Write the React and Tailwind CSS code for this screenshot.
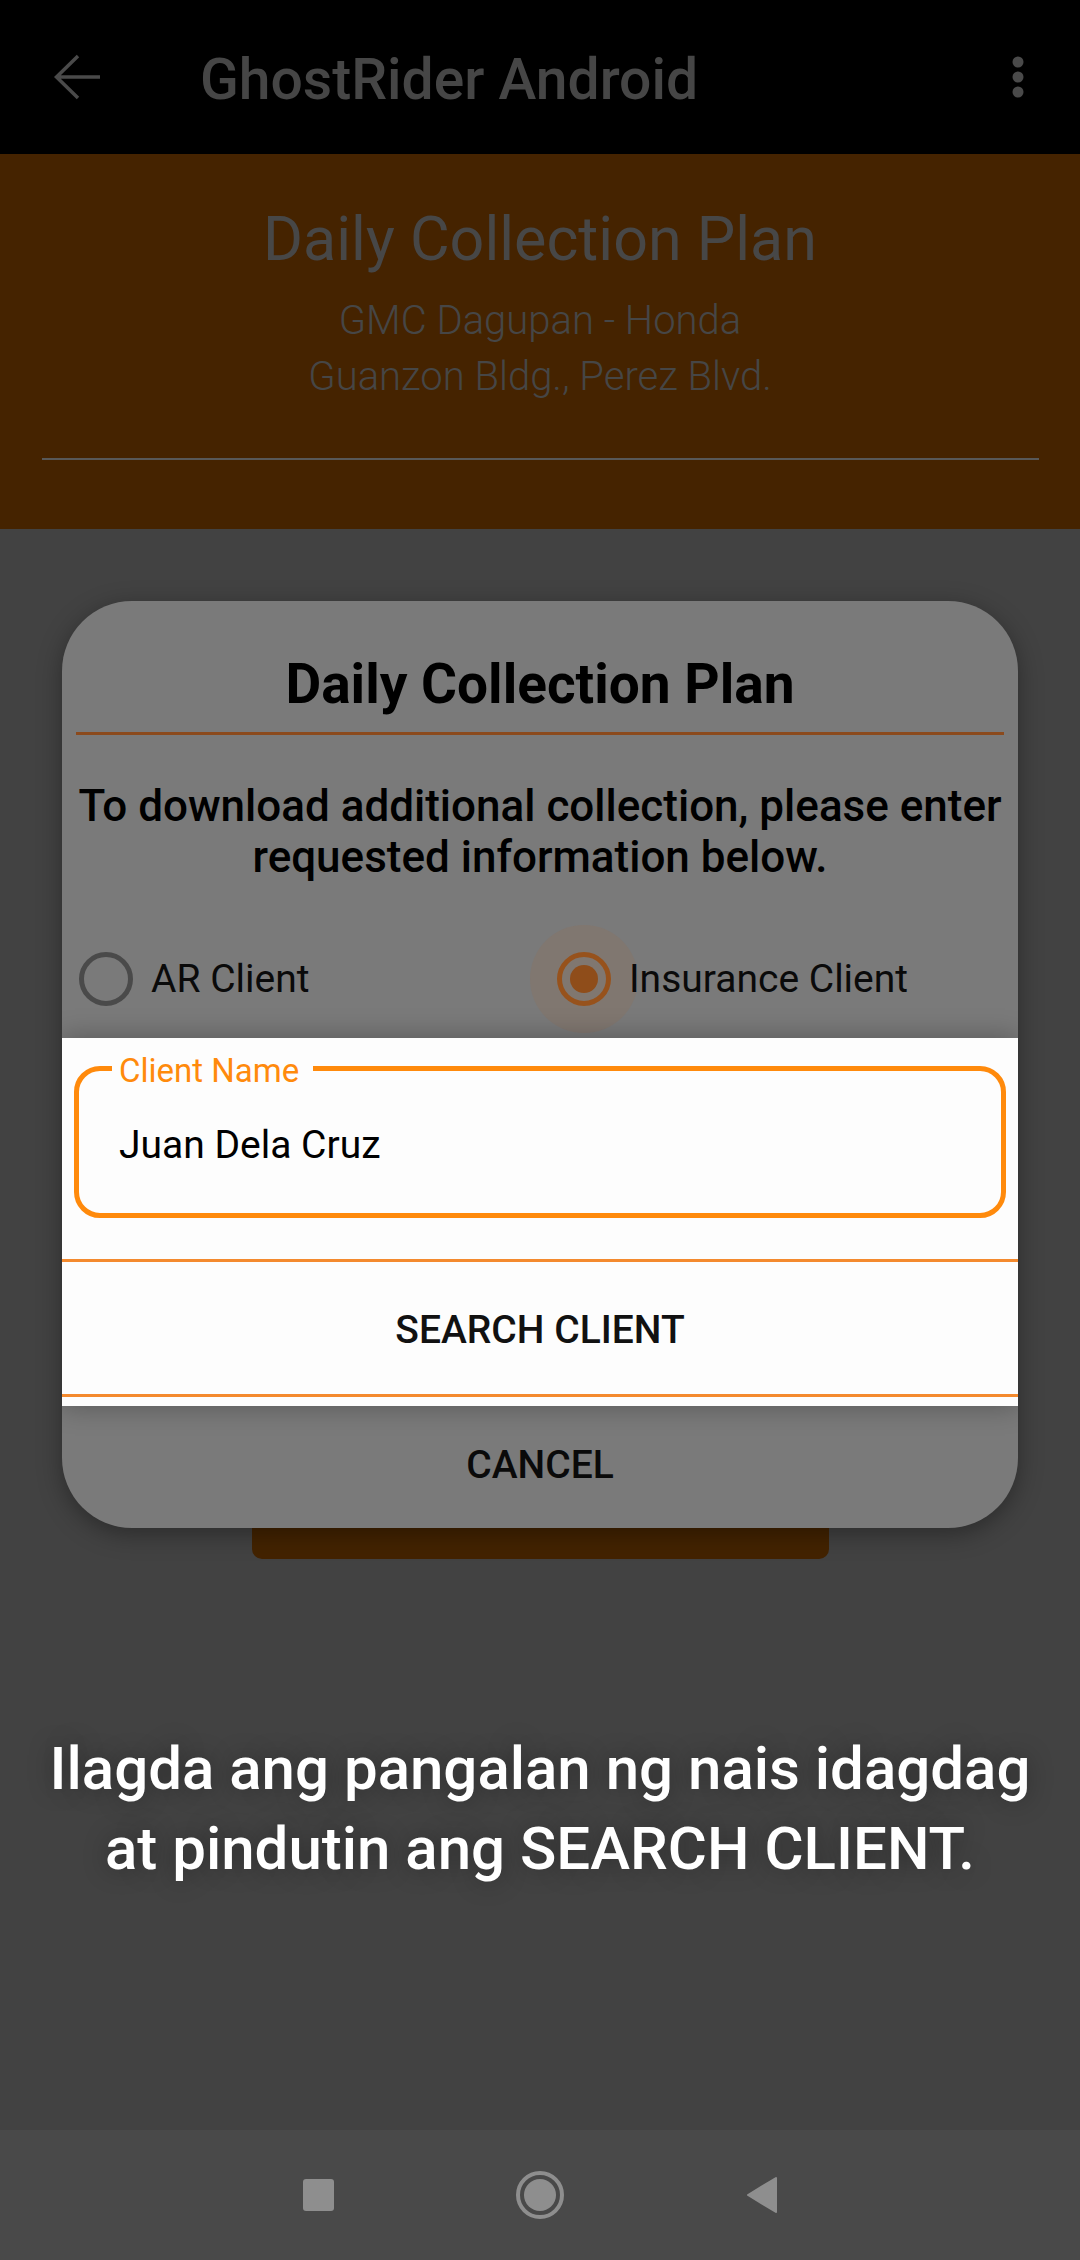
export default function App() {
  return (
    <div className="w-[1080px] h-[2260px] flex flex-col bg-[#424242] font-['Roboto',sans-serif] overflow-hidden">
      {/* Top app bar */}
      <div className="h-[154px] shrink-0 bg-black flex items-center pt-[6px]">
        <div className="w-[154px] h-[50px] flex items-center justify-center -mt-[6px]">
          <svg width="50" height="50" viewBox="0 0 50 50" fill="none">
            <path d="M48 25 H6 M26 4 L4.5 25 L26 46" stroke="#4a4a4a" strokeWidth="3.5" strokeLinecap="butt" strokeLinejoin="miter" />
          </svg>
        </div>
        <div className="ml-[46px] text-[57px] leading-[64px] font-medium text-[#464646]">GhostRider Android</div>
        <div className="ml-auto mr-[42px] w-[40px] flex justify-center -mt-[6px]">
          <svg width="14" height="46" viewBox="0 0 14 46">
            <circle cx="7" cy="8" r="5.5" fill="#4a4a4a" />
            <circle cx="7" cy="23" r="5.5" fill="#4a4a4a" />
            <circle cx="7" cy="38" r="5.5" fill="#4a4a4a" />
          </svg>
        </div>
      </div>

      {/* Brown header */}
      <div className="h-[375px] shrink-0 bg-[#452300] flex flex-col items-center pt-[49px]">
        <div className="text-[61px] leading-[72px] text-[#474747]">Daily Collection Plan</div>
        <div className="mt-[18px] text-[40px] leading-[56px] font-light text-[#464646] text-center">
          GMC Dagupan - Honda
          <br />
          Guanzon Bldg., Perez Blvd.
        </div>
        <div className="mt-[53px] h-[2px] w-[997px] bg-[#585858]" />
      </div>

      {/* Main */}
      <div className="flex flex-col items-center">
        <div className="relative z-10 mt-[72px] w-[956px] rounded-[70px] bg-[#7a7a7a] overflow-hidden shadow-[0_6px_24px_rgba(0,0,0,0.35)] flex flex-col">
          <div className="pt-[51px] text-center text-[55px] leading-[64px] font-bold text-black">Daily Collection Plan</div>
          <div className="mx-[14px] mt-[16px] h-[3px] bg-[#8b4a1d]" />
          <div className="mt-[46px] text-center text-[44px] leading-[51px] font-medium text-black">
            To download additional collection, please enter
            <br />
            requested information below.
          </div>

          {/* Radio row */}
          <div className="mt-[42px] h-[108px] grid grid-cols-2">
            <div className="flex items-center pl-[17px] gap-[18px]">
              <span className="w-[54px] h-[54px] shrink-0 rounded-full border-[5px] border-[#4a4a4a]" />
              <span className="text-[39px] leading-[44px] text-[#0a0a0a]">AR Client</span>
            </div>
            <div className="flex items-center pl-[17px] gap-[18px]">
              <span className="relative w-[54px] h-[54px] shrink-0">
                <span className="absolute -inset-[27px] rounded-full bg-[#807770]" />
                <span className="absolute inset-0 rounded-full border-[5px] border-[#97521c]" />
                <span className="absolute inset-[13px] rounded-full bg-[#8f4d1a]" />
              </span>
              <span className="relative text-[39px] leading-[44px] text-[#0a0a0a]">Insurance Client</span>
            </div>
          </div>

          {/* Highlighted white panel */}
          <div className="relative mt-[5px] bg-[#fdfdfd] shadow-[0_0_26px_rgba(0,0,0,0.3)] flex flex-col pt-[28px] pb-[9px]">
            <div className="relative mx-[12px] h-[152px] rounded-[26px] border-[5px] border-[#ff8a0c] flex items-center pl-[40px] pt-[5px]">
              <span className="absolute left-[33px] -top-[17px] bg-[#fdfdfd] pl-[7px] pr-[14px] text-[33px] leading-[33px] text-[#ff8a0c]">
                Client Name
              </span>
              <span className="text-[39px] leading-[46px] text-black">Juan Dela Cruz</span>
            </div>
            <div className="mt-[41px] h-[3px] bg-[#f48a2e]" />
            <div className="h-[132px] flex items-center justify-center pt-[4px] text-[39px] font-medium text-[#111111]">SEARCH CLIENT</div>
            <div className="h-[3px] bg-[#f48a2e]" />
          </div>

          <div className="h-[122px] flex items-center justify-center pb-[4px] text-[39px] font-medium text-[#0a0a0a]">CANCEL</div>
        </div>
        <div className="-mt-[40px] w-[577px] h-[71px] bg-[#432300] rounded-b-[10px]" />

        <div className="mt-[170px] text-center text-[60px] leading-[80px] font-medium text-white [text-shadow:0_0_24px_rgba(0,0,0,0.35)]">
          Ilagda ang pangalan ng nais idagdag
          <br />
          at pindutin ang SEARCH CLIENT.
        </div>
      </div>

      <div className="flex-1" />

      {/* Nav bar */}
      <div className="h-[130px] shrink-0 bg-[#494949] flex items-center justify-center gap-[182px]">
        <span className="w-[31px] h-[32px] rounded-[3px] bg-[#8e8e8e]" />
        <span className="w-[48px] h-[48px] rounded-full border-[4px] border-[#8e8e8e] flex items-center justify-center">
          <span className="w-[32px] h-[32px] rounded-full bg-[#8e8e8e]" />
        </span>
        <svg width="32" height="38" viewBox="0 0 32 38">
          <path d="M30 2 L2 19 L30 36 Z" fill="#8e8e8e" stroke="#8e8e8e" strokeWidth="2" strokeLinejoin="round" />
        </svg>
      </div>
    </div>
  );
}
